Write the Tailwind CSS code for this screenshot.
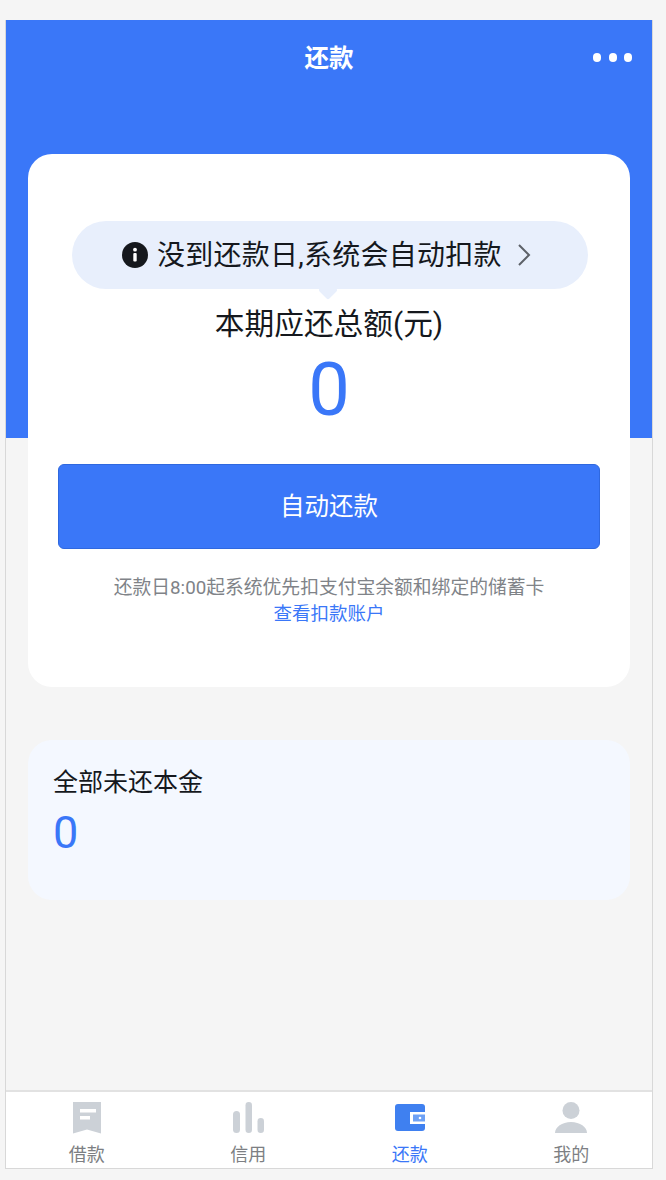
<!DOCTYPE html>
<html lang="zh">
<head>
<meta charset="utf-8">
<script src="https://cdn.jsdelivr.net/npm/@tailwindcss/browser@4"></script>
</head>
<body class="bg-[#f5f5f5] font-['Roboto','Noto_Sans_CJK_SC',sans-serif]">
<div class="w-[666px] h-[1180px] pt-[20px] pl-[5px] overflow-hidden">
  <div class="w-[648px] h-[1149px] border border-[#d8d8d8] border-t-0 bg-[#f5f5f5] flex flex-col relative">
    <header class="h-[418px] bg-[#3a77f8] shrink-0 flex items-start justify-center pt-[21px] relative">
      <h1 class="text-[24.5px] leading-[36px] font-bold text-white">还款</h1>
      <div class="absolute right-[20px] top-[33px] flex gap-[7.5px]">
        <span class="w-[8px] h-[9px] rounded-full bg-white"></span>
        <span class="w-[8px] h-[9px] rounded-full bg-white"></span>
        <span class="w-[8px] h-[9px] rounded-full bg-white"></span>
      </div>
    </header>
    <main class="flex-1 px-[22px] mt-[-284px] relative">
      <section class="h-[533px] bg-white rounded-[24px] flex flex-col items-center pt-[67px]">
        <div class="relative ml-[2px] w-[516px] h-[68px] rounded-[34px] bg-[#e8effc] flex items-center justify-center pr-[7px] text-[28px] text-[#15181d] shrink-0">
          <svg class="w-[26px] h-[26px] mr-[9px]" viewBox="0 0 26 26"><circle cx="13" cy="13" r="13" fill="#15181d"/><circle cx="13" cy="7.700" r="1.900" fill="#fff"/><rect x="11.300" y="11" width="3.400" height="8.500" rx="1" fill="#fff"/></svg>
          <span class="leading-[40px] pt-[2px] tracking-[0.25px]">没到还款日,系统会自动扣款</span>
          <svg class="w-[14px] h-[24px] ml-[15px]" viewBox="0 0 14 24" fill="none"><path d="M2 2l10 10L2 22" stroke="#5d6168" stroke-width="2"/></svg>
          <span class="absolute left-[249px] bottom-[-7.5px] w-[14px] h-[14px] rotate-45 bg-[#e8effc] rounded-[2px]"></span>
        </div>
        <h2 class="mt-[15px] text-[29.7px] leading-[40px] text-[#15181d]">本期应还总额(元)</h2>
        <div class="mt-[2px] text-[74px] leading-[88px] text-[#3a77f8]">0</div>
        <button class="mt-[30px] w-[542px] h-[85px] shrink-0 pt-[2px] rounded-[6px] bg-[#3a77f8] border border-[#2f68df] text-white text-[24.5px]">自动还款</button>
        <p class="mt-[26px] text-[18.8px] leading-[26px] text-[#808388] text-center whitespace-nowrap">还款日8:00起系统优先扣支付宝余额和绑定的储蓄卡<br><span class="text-[#3a77f8] text-[18.5px]">查看扣款账户</span></p>
      </section>
      <section class="mt-[53px] h-[160px] rounded-[24px] bg-[#f4f8ff] px-[25px] pt-[25px]">
        <h3 class="text-[25px] leading-[36px] text-[#15181d]">全部未还本金</h3>
        <div class="mt-[5px] text-[45px] leading-[54px] text-[#3a77f8]">0</div>
      </section>
    </main>
    <nav class="h-[78px] shrink-0 bg-white border-t-2 border-[#e2e2e2] grid grid-cols-4">
      <a class="flex flex-col items-center pt-[10px]">
        <svg class="w-[30px] h-[33px]" viewBox="0 0 30 33"><path d="M1 0h28v31.500L15 27.500 1 31.500z" fill="#ccd1d7"/><path d="M8 7h16v3.500H8zM8 14h10v3.500H8z" fill="#fff"/></svg>
        <span class="text-[18px] leading-[24px] mt-[8px] text-[#7d7f83]">借款</span>
      </a>
      <a class="flex flex-col items-center pt-[10px]">
        <svg class="w-[34px] h-[33px]" viewBox="0 0 34 33" fill="#ccd1d7"><rect x="2" y="9" width="7" height="22" rx="3.500"/><rect x="14.500" y="0" width="6.500" height="31" rx="3.250"/><rect x="26.500" y="16" width="6.500" height="15" rx="3.250"/></svg>
        <span class="text-[18px] leading-[24px] mt-[8px] text-[#7d7f83]">信用</span>
      </a>
      <a class="flex flex-col items-center pt-[10px]">
        <svg class="w-[32px] h-[33px]" viewBox="0 0 32 33"><rect x="1" y="2" width="30" height="27" rx="3" fill="#3f80f0"/><path d="M16 10h15v12H16z" fill="#fff"/><path d="M19 12.500h12v7H19z" fill="#6ea1f5"/><circle cx="26" cy="16" r="1.300" fill="#fff"/></svg>
        <span class="text-[18px] leading-[24px] mt-[8px] text-[#3a77f8]">还款</span>
      </a>
      <a class="flex flex-col items-center pt-[10px]">
        <svg class="w-[34px] h-[33px]" viewBox="0 0 34 33" fill="#ccd1d7"><circle cx="17" cy="8.500" r="8.500"/><path d="M1 31c0-6 7-11 16-11s16 5 16 11z"/></svg>
        <span class="text-[18px] leading-[24px] mt-[8px] text-[#7d7f83]">我的</span>
      </a>
    </nav>
  </div>
</div>
</body>
</html>
